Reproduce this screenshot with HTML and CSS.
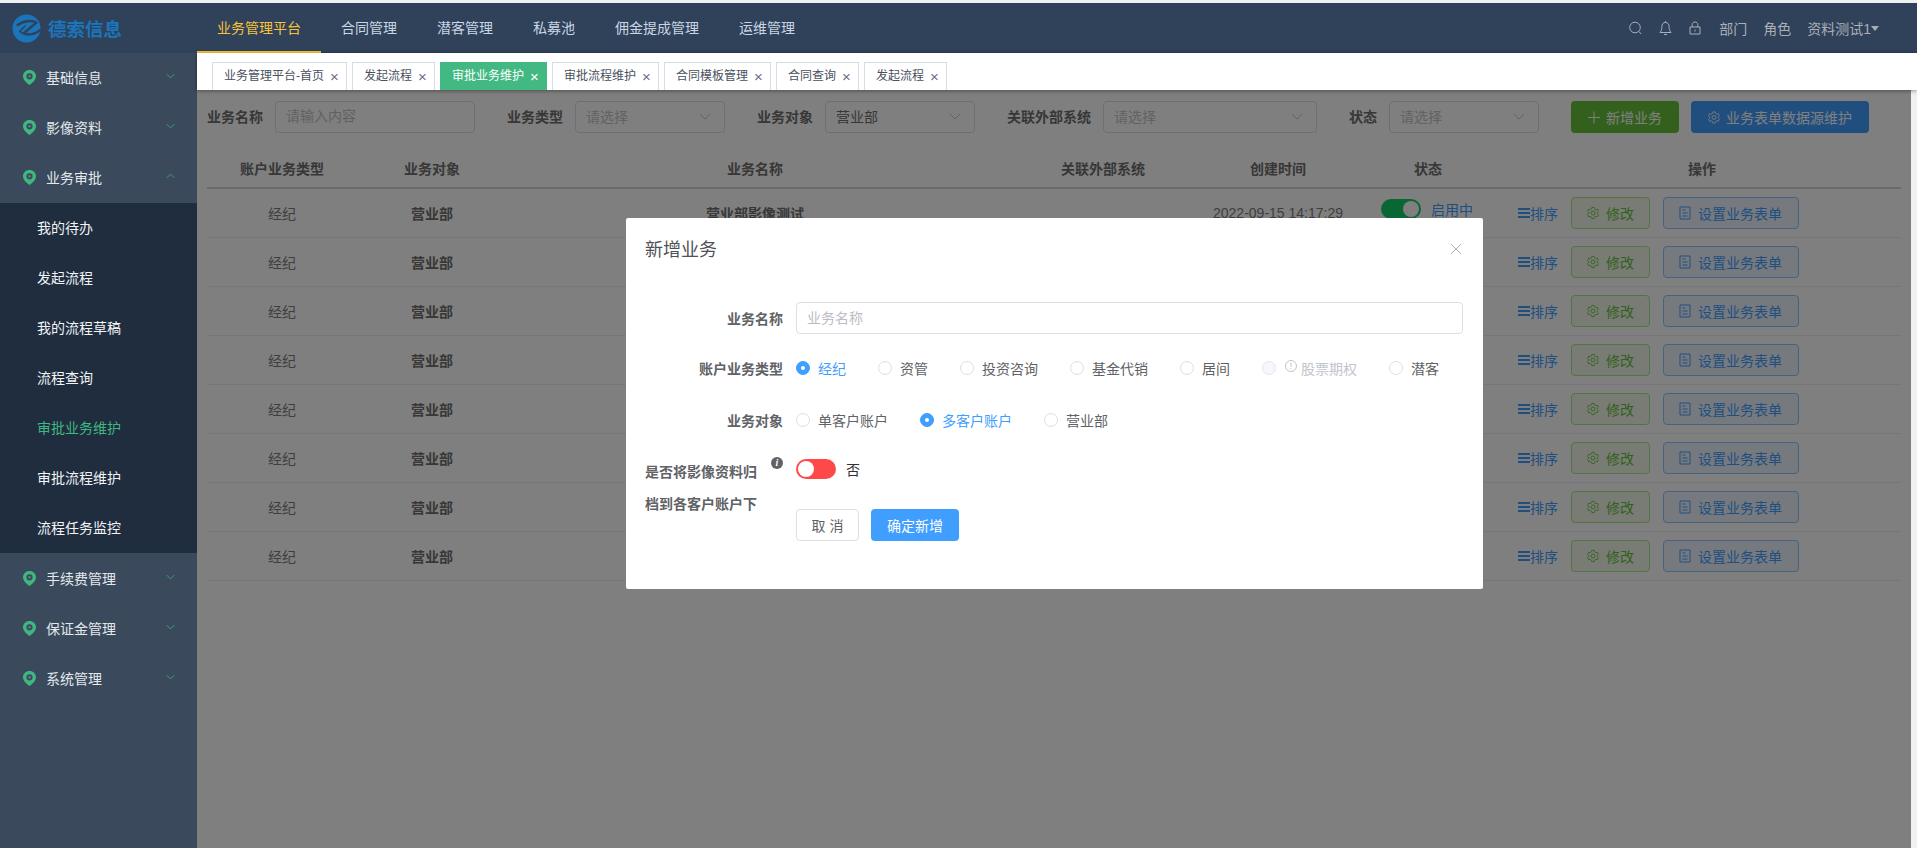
FILE: index.html
```html
<!DOCTYPE html>
<html lang="zh-CN">
<head>
    <meta charset="UTF-8">
    <title>业务管理平台</title>
    <link rel="stylesheet" href="styles.css">
</head>
<body>
    <svg class="icon-defs" width="0" height="0">
        <symbol id="i-gear" viewBox="0 0 14 15">
            <path d="M5.6 1h2.8l.4 1.7 1.5.9 1.7-.5 1.4 2.4-1.3 1.2v1.6l1.3 1.2-1.4 2.4-1.7-.5-1.5.9-.4 1.7H5.6l-.4-1.7-1.5-.9-1.7.5L.6 9.5l1.3-1.2V6.7L.6 5.5 2 3.1l1.7.5 1.5-.9z" fill="none" stroke="currentColor"/>
            <circle cx="7" cy="7.5" r="2.3" fill="none" stroke="currentColor"/>
        </symbol>
        <symbol id="i-doc" viewBox="0 0 12 14">
            <path d="M1 1h10v12H1zM3.5 4h3M3.5 7h5M3.5 10h5" fill="none" stroke="currentColor"/>
        </symbol>
        <symbol id="i-sort" viewBox="0 0 12 12">
            <path d="M0 1h12v2H0zM0 5h12v2H0zM0 9h12v2H0z" fill="currentColor"/>
        </symbol>
        <symbol id="i-down" viewBox="0 0 12 7">
            <path d="M1 1l5 5 5-5" fill="none" stroke="currentColor"/>
        </symbol>
        <symbol id="i-pin" viewBox="0 0 13 15">
            <path fill-rule="evenodd" d="M6.5 0C10 0 13 2.7 13 6.2c0 3.6-3.6 6.600-6.500 8.800C3.600 12.800 0 9.800 0 6.200 0 2.700 3 0 6.500 0zm0 3.200a3.100 3.100 0 1 0 0 6.200 3.100 3.100 0 0 0 0-6.200z" fill="currentColor"/>
            <circle cx="6.500" cy="6.300" r="1.300" fill="#5f7f80"/>
        </symbol>
    </svg>

    <header class="topbar">
        <div class="logo">
            <svg class="logo-mark" viewBox="0 0 30 30">
                <circle cx="15" cy="15" r="14.500" fill="#1a75bb"/>
                <path d="M5 12c6-5 16-6 20-3L12 20c5 2 12 1 18-4" fill="none" stroke="#30415a" stroke-width="2.500"/>
                <path d="M11 20l-3-2 6-6" fill="none" stroke="#30415a" stroke-width="1.500"/>
            </svg>
            <span class="logo-text">德索信息</span>
        </div>
        <nav class="topnav">
            <a class="topnav-item active">业务管理平台</a>
            <a class="topnav-item">合同管理</a>
            <a class="topnav-item">潜客管理</a>
            <a class="topnav-item">私募池</a>
            <a class="topnav-item">佣金提成管理</a>
            <a class="topnav-item">运维管理</a>
        </nav>
        <div class="top-tools">
            <svg class="tool-icon" width="13" height="14" viewBox="0 0 13 14"><circle cx="6" cy="6.500" r="5.300" fill="none" stroke="currentColor"/><path d="M10 10.500l2 2.500" stroke="currentColor"/></svg>
            <svg class="tool-icon" width="13" height="15" viewBox="0 0 13 15"><path d="M6.500 1.500c2.500 0 3.600 1.800 3.600 4.200 0 2.500.6 4.100 1.900 5.800H1c1.300-1.700 1.900-3.300 1.900-5.800 0-2.400 1.100-4.200 3.600-4.200zM6.500 0v1.500M5 13.500h3" fill="none" stroke="currentColor"/></svg>
            <svg class="tool-icon" width="12" height="14" viewBox="0 0 12 14"><path d="M1 6h10v7H1zM3.200 6V3.500C3.200 1.900 4.400 1 6 1s2.800.9 2.800 2.500V6M6 8.500v2" fill="none" stroke="currentColor"/></svg>
            <span class="tool-text">部门</span>
            <span class="tool-text">角色</span>
            <span class="tool-text user">资料测试1<i class="caret"></i></span>
        </div>
    </header>

    <div class="main">
        <aside class="sidebar">
            <div class="menu-item raised"><svg class="pin"><use href="#i-pin"/></svg>基础信息<svg class="menu-arrow"><use href="#i-down"/></svg></div>
            <div class="menu-item raised"><svg class="pin"><use href="#i-pin"/></svg>影像资料<svg class="menu-arrow"><use href="#i-down"/></svg></div>
            <div class="menu-item raised"><svg class="pin"><use href="#i-pin"/></svg>业务审批<svg class="menu-arrow up"><use href="#i-down"/></svg></div>
            <div class="submenu">
                <div class="submenu-item">我的待办</div>
                <div class="submenu-item">发起流程</div>
                <div class="submenu-item">我的流程草稿</div>
                <div class="submenu-item">流程查询</div>
                <div class="submenu-item active">审批业务维护</div>
                <div class="submenu-item">审批流程维护</div>
                <div class="submenu-item">流程任务监控</div>
            </div>
            <div class="menu-item"><svg class="pin"><use href="#i-pin"/></svg>手续费管理<svg class="menu-arrow"><use href="#i-down"/></svg></div>
            <div class="menu-item"><svg class="pin"><use href="#i-pin"/></svg>保证金管理<svg class="menu-arrow"><use href="#i-down"/></svg></div>
            <div class="menu-item"><svg class="pin"><use href="#i-pin"/></svg>系统管理<svg class="menu-arrow"><use href="#i-down"/></svg></div>
        </aside>

        <section class="content">
            <div class="tabs">
                <div class="tab">业务管理平台-首页<span class="tab-close">×</span></div>
                <div class="tab">发起流程<span class="tab-close">×</span></div>
                <div class="tab active">审批业务维护<span class="tab-close">×</span></div>
                <div class="tab">审批流程维护<span class="tab-close">×</span></div>
                <div class="tab">合同模板管理<span class="tab-close">×</span></div>
                <div class="tab">合同查询<span class="tab-close">×</span></div>
                <div class="tab">发起流程<span class="tab-close">×</span></div>
            </div>

            <div class="workarea">
                <div class="filters">
                    <label class="filter-label">业务名称</label>
                    <input class="field w-200" placeholder="请输入内容">
                    <label class="filter-label">业务类型</label>
                    <div class="field select w-150"><span class="hint">请选择</span><svg class="select-arrow"><use href="#i-down"/></svg></div>
                    <label class="filter-label">业务对象</label>
                    <div class="field select w-150"><span>营业部</span><svg class="select-arrow"><use href="#i-down"/></svg></div>
                    <label class="filter-label">关联外部系统</label>
                    <div class="field select w-214"><span class="hint">请选择</span><svg class="select-arrow"><use href="#i-down"/></svg></div>
                    <label class="filter-label">状态</label>
                    <div class="field select w-150"><span class="hint">请选择</span><svg class="select-arrow"><use href="#i-down"/></svg></div>
                    <button class="btn btn-green"><svg class="btn-icon" viewBox="0 0 12 12"><path d="M6 0v12M0 6h12" stroke="currentColor"/></svg>新增业务</button>
                    <button class="btn btn-blue"><svg class="btn-icon"><use href="#i-gear"/></svg>业务表单数据源维护</button>
                </div>

                <table class="data-table">
                    <colgroup>
                        <col class="c-150"><col class="c-150"><col class="c-496"><col class="c-200"><col class="c-150"><col class="c-150"><col>
                    </colgroup>
                    <thead>
                        <tr><th>账户业务类型</th><th>业务对象</th><th>业务名称</th><th>关联外部系统</th><th>创建时间</th><th>状态</th><th>操作</th></tr>
                    </thead>
                    <tbody>
                        <tr>
                            <td>经纪</td><td class="strong">营业部</td><td class="strong">营业部影像测试</td><td></td><td>2022-09-15 14:17:29</td>
                            <td><div class="state"><span class="switch on"></span><span class="state-text">启用中</span></div></td>
                            <td><div class="ops"><span class="sort"><svg><use href="#i-sort"/></svg>排序</span><a class="op op-green"><svg><use href="#i-gear"/></svg>修改</a><a class="op op-blue"><svg><use href="#i-doc"/></svg>设置业务表单</a></div></td>
                        </tr>
                        <tr>
                            <td>经纪</td><td class="strong">营业部</td><td></td><td></td><td></td><td></td>
                            <td><div class="ops"><span class="sort"><svg><use href="#i-sort"/></svg>排序</span><a class="op op-green"><svg><use href="#i-gear"/></svg>修改</a><a class="op op-blue"><svg><use href="#i-doc"/></svg>设置业务表单</a></div></td>
                        </tr>
                        <tr>
                            <td>经纪</td><td class="strong">营业部</td><td></td><td></td><td></td><td></td>
                            <td><div class="ops"><span class="sort"><svg><use href="#i-sort"/></svg>排序</span><a class="op op-green"><svg><use href="#i-gear"/></svg>修改</a><a class="op op-blue"><svg><use href="#i-doc"/></svg>设置业务表单</a></div></td>
                        </tr>
                        <tr>
                            <td>经纪</td><td class="strong">营业部</td><td></td><td></td><td></td><td></td>
                            <td><div class="ops"><span class="sort"><svg><use href="#i-sort"/></svg>排序</span><a class="op op-green"><svg><use href="#i-gear"/></svg>修改</a><a class="op op-blue"><svg><use href="#i-doc"/></svg>设置业务表单</a></div></td>
                        </tr>
                        <tr>
                            <td>经纪</td><td class="strong">营业部</td><td></td><td></td><td></td><td></td>
                            <td><div class="ops"><span class="sort"><svg><use href="#i-sort"/></svg>排序</span><a class="op op-green"><svg><use href="#i-gear"/></svg>修改</a><a class="op op-blue"><svg><use href="#i-doc"/></svg>设置业务表单</a></div></td>
                        </tr>
                        <tr>
                            <td>经纪</td><td class="strong">营业部</td><td></td><td></td><td></td><td></td>
                            <td><div class="ops"><span class="sort"><svg><use href="#i-sort"/></svg>排序</span><a class="op op-green"><svg><use href="#i-gear"/></svg>修改</a><a class="op op-blue"><svg><use href="#i-doc"/></svg>设置业务表单</a></div></td>
                        </tr>
                        <tr>
                            <td>经纪</td><td class="strong">营业部</td><td></td><td></td><td></td><td></td>
                            <td><div class="ops"><span class="sort"><svg><use href="#i-sort"/></svg>排序</span><a class="op op-green"><svg><use href="#i-gear"/></svg>修改</a><a class="op op-blue"><svg><use href="#i-doc"/></svg>设置业务表单</a></div></td>
                        </tr>
                        <tr>
                            <td>经纪</td><td class="strong">营业部</td><td></td><td></td><td></td><td></td>
                            <td><div class="ops"><span class="sort"><svg><use href="#i-sort"/></svg>排序</span><a class="op op-green"><svg><use href="#i-gear"/></svg>修改</a><a class="op op-blue"><svg><use href="#i-doc"/></svg>设置业务表单</a></div></td>
                        </tr>
                    </tbody>
                </table>
            </div>

            <div class="mask"></div>

            <div class="modal">
                <div class="modal-head">
                    <h2>新增业务</h2>
                    <svg class="modal-close" viewBox="0 0 10 10"><path d="M0 0l10 10M10 0L0 10" stroke="currentColor" stroke-width=".8"/></svg>
                </div>
                <div class="form-row row-name">
                    <label class="form-label">业务名称</label>
                    <input class="form-input" placeholder="业务名称">
                </div>
                <div class="form-row row-type">
                    <label class="form-label">账户业务类型</label>
                    <div class="radios">
                        <span class="radio checked"><i></i>经纪</span>
                        <span class="radio"><i></i>资管</span>
                        <span class="radio"><i></i>投资咨询</span>
                        <span class="radio"><i></i>基金代销</span>
                        <span class="radio"><i></i>居间</span>
                        <span class="radio disabled"><i></i><svg class="warn" viewBox="0 0 12 12"><circle cx="6" cy="6" r="5.500" fill="none" stroke="currentColor"/><path d="M6 2.500v4.500M6 8.200v1.200" stroke="currentColor"/></svg>股票期权</span>
                        <span class="radio"><i></i>潜客</span>
                    </div>
                </div>
                <div class="form-row row-target">
                    <label class="form-label">业务对象</label>
                    <div class="radios">
                        <span class="radio"><i></i>单客户账户</span>
                        <span class="radio checked"><i></i>多客户账户</span>
                        <span class="radio"><i></i>营业部</span>
                    </div>
                </div>
                <div class="form-row row-archive">
                    <label class="form-label multi">是否将影像资料归档到各客户账户下<span class="info">i</span></label>
                    <div class="archive-side">
                        <div class="archive-switch"><span class="switch off"></span><span class="switch-text">否</span></div>
                        <div class="modal-actions">
                            <button class="btn-cancel">取 消</button>
                            <button class="btn-confirm">确定新增</button>
                        </div>
                    </div>
                </div>
            </div>
        </section>
    </div>
</body>
</html>
```

FILE: styles.css
```css
* {
    margin: 0;
    padding: 0;
    box-sizing: border-box;
}

html, body {
    height: 848px;
    overflow: hidden;
}

body {
    background-color: #f0f0f0;
    padding-top: 3px;
    font-family: "Liberation Sans", "Noto Sans CJK SC", sans-serif;
    font-size: 14px;
    color: #606266;
}

.icon-defs {
    position: absolute;
}

/* top bar */
.topbar {
    display: flex;
    height: 50px;
    background-color: #30415a;
}

.logo {
    width: 197px;
    display: flex;
    align-items: center;
    padding: 0 0 0 12px;
    flex-shrink: 0;
}

.logo-mark {
    width: 29px;
    height: 29px;
    margin-right: 7px;
}

.logo-text {
    font-size: 18.500px;
    font-weight: 700;
    color: #1a75bb;
}

.topnav {
    display: flex;
}

.topnav-item {
    padding: 0 20px;
    line-height: 50px;
    color: #c9d6e4;
}

.topnav-item.active {
    color: #f5c33b;
    border-bottom: 2px solid #f5c33b;
}

.top-tools {
    margin-left: auto;
    display: flex;
    align-items: center;
    padding-right: 38px;
    color: #a9afb7;
}

.tool-icon {
    margin-right: 17px;
}

.tool-text {
    margin-left: 16px;
}

.tool-icon + .tool-text {
    margin-left: 1px;
}

.user {
    display: inline-flex;
    align-items: center;
}

.caret {
    border-left: 4.500px solid transparent;
    border-right: 4.500px solid transparent;
    border-top: 5px solid #a9afb7;
}

.main {
    display: flex;
    height: 795px;
}

/* left menu */
.sidebar {
    width: 197px;
    flex-shrink: 0;
    background-color: #3a4a5c;
}

.menu-item {
    height: 50px;
    display: flex;
    align-items: center;
    padding: 0 22px 0 23px;
    color: #e4e8ec;
}

.menu-item.raised {
    padding-bottom: 2px;
}

.pin {
    width: 13px;
    height: 15px;
    margin-right: 10px;
    color: #3fb880;
}

.menu-arrow {
    width: 9px;
    height: 6px;
    margin-left: auto;
    margin-bottom: 2px;
    color: #3fb880;
}

.menu-arrow.up {
    transform: rotate(180deg);
}

.submenu {
    background-color: #1f2d3f;
}

.submenu-item {
    height: 50px;
    line-height: 50px;
    padding-left: 37px;
    color: #f2f4f6;
}

.submenu-item.active {
    color: #3fb880;
}

/* content */
.content {
    flex: 1;
    position: relative;
}

.tabs {
    position: relative;
    z-index: 2;
    height: 37px;
    display: flex;
    align-items: flex-end;
    gap: 5px;
    padding-left: 15px;
    background-color: #fff;
    box-shadow: 0 1px 4px rgba(0, 0, 0, 0.4);
}

.tab {
    height: 28px;
    line-height: 26px;
    padding: 0 8px 0 11px;
    border: 1px solid #d8dce5;
    border-bottom: none;
    font-size: 12px;
    color: #495060;
    white-space: nowrap;
}

.tab.active {
    background-color: #42b983;
    border-color: #42b983;
    color: #fff;
}

.tab-close {
    display: inline-block;
    width: 8px;
    margin-left: 6px;
    font-size: 15px;
    font-weight: 400;
    line-height: 1;
    vertical-align: -2px;
    color: #6c7280;
}

.tab.active .tab-close {
    color: #fff;
}

.workarea {
    height: 758px;
    margin-right: 6px;
    padding: 11px 10px 0;
    background-color: #fff;
}

.filters {
    display: flex;
    align-items: center;
    height: 32px;
}

.filter-label {
    font-weight: 700;
    color: #6e6e6e;
    margin-right: 12px;
    padding-bottom: 2px;
    white-space: nowrap;
}

.field {
    height: 32px;
    margin-right: 32px;
    padding: 0 10px 2px;
    border: 1px solid #dcdfe6;
    border-radius: 4px;
    background-color: #fff;
    font: inherit;
    color: #6e6e6e;
}

.field::placeholder, .hint {
    color: #c4c4c4;
}

.select {
    display: flex;
    align-items: center;
    justify-content: space-between;
}

.select-arrow {
    width: 12px;
    height: 7px;
    margin-right: 3px;
    color: #c0c4cc;
}

.w-150 { width: 150px; }
.w-200 { width: 200px; }
.w-214 { width: 214px; }

.btn {
    height: 32px;
    padding: 0 17px;
    display: inline-flex;
    align-items: center;
    gap: 6px;
    border: none;
    border-radius: 4px;
    font: inherit;
    color: #fff;
}

.btn-icon {
    width: 12px;
    height: 13px;
}

.btn-green {
    background-color: #67c23a;
    margin-right: 12px;
}

.btn-blue {
    background-color: #409eff;
}

.data-table {
    width: 1694px;
    margin-top: 16px;
    border-collapse: collapse;
    table-layout: fixed;
}

.c-150 { width: 150px; }
.c-200 { width: 200px; }
.c-496 { width: 496px; }

.data-table th {
    height: 39px;
    border-bottom: 2px solid #d4d4d4;
    font-weight: 700;
    color: #6e6e6e;
}

.data-table td {
    height: 49px;
    border-bottom: 1px solid #ebeef5;
    text-align: center;
    color: #7c7c7c;
}

.data-table td.strong {
    font-weight: 700;
    color: #6e6e6e;
}

.state {
    display: flex;
    align-items: center;
    padding: 0 0 8px 28px;
}

.state-text {
    margin-left: 10px;
    color: #409eff;
}

.switch {
    position: relative;
    width: 40px;
    height: 20px;
    border-radius: 10px;
    display: block;
    flex-shrink: 0;
}

.switch::after {
    content: "";
    position: absolute;
    top: 2px;
    width: 16px;
    height: 16px;
    border-radius: 50%;
    background-color: #fff;
}

.switch.on {
    background-color: #13ce66;
}

.switch.on::after {
    right: 2px;
}

.switch.off {
    background-color: #ff4949;
}

.switch.off::after {
    left: 2px;
}

.ops {
    display: flex;
    align-items: center;
    padding-left: 15px;
}

.sort {
    display: inline-flex;
    align-items: center;
    margin-right: 13px;
    color: #409eff;
}

.sort svg {
    width: 12px;
    height: 12px;
}

.op {
    height: 32px;
    padding: 0 15px;
    display: inline-flex;
    align-items: center;
    gap: 7px;
    border-radius: 4px;
    border: 1px solid;
}

.op svg {
    width: 12px;
    height: 14px;
}

.op-green {
    margin-right: 13px;
    background-color: #f0f9eb;
    border-color: #a4e884;
    color: #67c23a;
}

.op-blue {
    width: 136px;
    background-color: #ecf5ff;
    border-color: #8cc5ff;
    color: #409eff;
}

.mask {
    position: absolute;
    z-index: 1;
    top: 37px;
    left: 0;
    right: 6px;
    bottom: 0;
    background-color: rgba(0, 0, 0, 0.5);
}

/* dialog */
.modal {
    position: absolute;
    z-index: 3;
    top: 165px;
    left: 429px;
    width: 857px;
    height: 371px;
    padding: 0 18px 0 19px;
    background-color: #fff;
    border-radius: 2px;
}

.modal-head {
    height: 84px;
    padding-top: 19px;
    display: flex;
    justify-content: space-between;
}

.modal-head h2 {
    font-size: 18px;
    font-weight: 400;
    line-height: 26px;
    color: #4f5156;
}

.modal-close {
    width: 10px;
    height: 10px;
    margin: 7px 4px 0 0;
    color: #9a9ca3;
}

.form-row {
    display: flex;
    align-items: center;
}

.form-label {
    width: 138px;
    margin-right: 13px;
    flex-shrink: 0;
    text-align: right;
    font-weight: 700;
    color: #606266;
}

.form-input {
    width: 667px;
    height: 32px;
    padding: 0 10px;
    border: 1px solid #dcdfe6;
    border-radius: 4px;
    font: inherit;
}

.form-input::placeholder {
    color: #bbbdc3;
}

.row-type {
    height: 32px;
    margin-top: 18px;
}

.row-target {
    height: 32px;
    margin-top: 20px;
}

.radios {
    display: flex;
    gap: 32px;
}

.radio {
    display: inline-flex;
    align-items: center;
    color: #606266;
}

.radio i {
    position: relative;
    width: 14px;
    height: 14px;
    margin-right: 8px;
    border: 1px solid #dcdfe6;
    border-radius: 50%;
    background-color: #fff;
}

.radio.checked {
    color: #409eff;
}

.radio.checked i {
    background-color: #409eff;
    border-color: #409eff;
}

.radio.checked i::after {
    content: "";
    position: absolute;
    top: 4px;
    left: 4px;
    width: 4px;
    height: 4px;
    border-radius: 50%;
    background-color: #fff;
}

.radio.disabled {
    color: #c0c4cc;
}

.radio.disabled i {
    background-color: #f5f7fa;
    border-color: #e4e7ed;
}

.warn {
    width: 12px;
    height: 12px;
    margin: -4px 4px 0 1px;
}

.row-archive {
    align-items: flex-start;
    margin-top: 17px;
}

.form-label.multi {
    position: relative;
    padding: 3px 26px 0 0;
    line-height: 32px;
    text-align: left;
}

.info {
    position: absolute;
    top: 4px;
    right: 0;
    width: 12px;
    height: 12px;
    border-radius: 50%;
    background-color: #606266;
    color: #fff;
    font: italic 700 10px/12px "Liberation Serif", serif;
    text-align: center;
}

.archive-side {
    padding-top: 6px;
}

.archive-switch {
    display: flex;
    align-items: center;
}

.switch-text {
    margin-left: 10px;
    color: #303133;
}

.modal-actions {
    display: flex;
    gap: 12px;
    margin-top: 30px;
}

.btn-cancel, .btn-confirm {
    height: 32px;
    border-radius: 4px;
    font: inherit;
}

.btn-cancel {
    width: 63px;
    border: 1px solid #dcdfe6;
    background-color: #fff;
    color: #606266;
}

.btn-confirm {
    width: 88px;
    border: none;
    background-color: #409eff;
    color: #fff;
}
```
